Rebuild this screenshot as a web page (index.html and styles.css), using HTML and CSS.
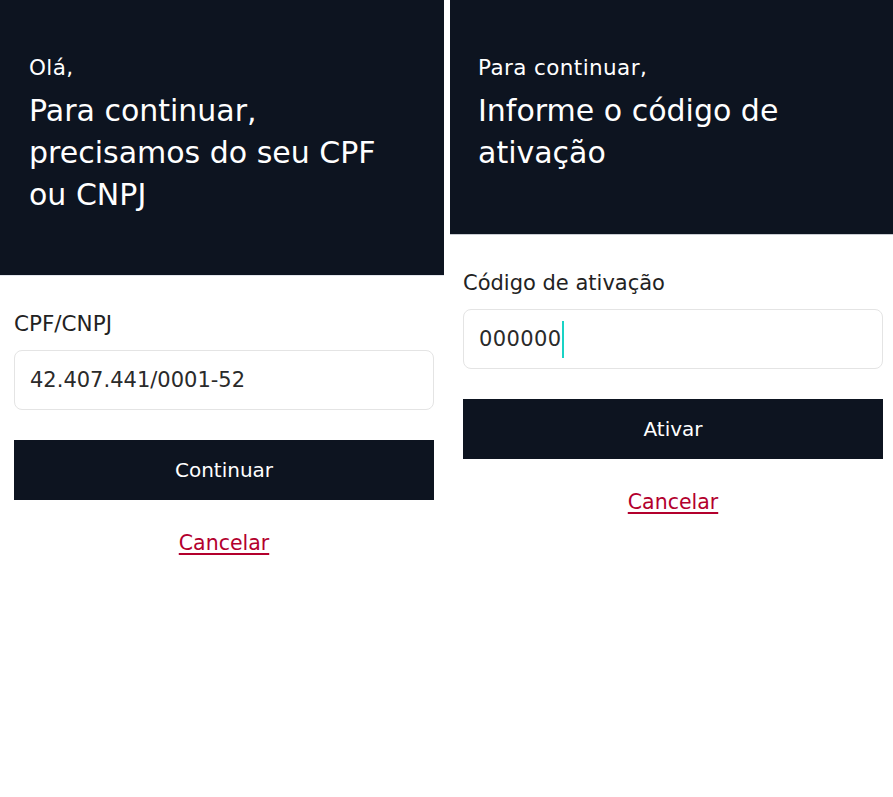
FILE: index.html
```html
<!DOCTYPE html>
<html lang="pt-BR">
<head>
<meta charset="utf-8">
<title>Ativação</title>
<link rel="stylesheet" href="styles.css">
</head>
<body>
<div class="screens">
  <section class="screen screen-cpf">
    <header class="hero hero-cpf">
      <p class="hero-kicker">Olá,</p>
      <h1 class="hero-title">Para continuar,<br>precisamos do seu CPF<br>ou CNPJ</h1>
    </header>
    <div class="form form-cpf">
      <label class="field-label">CPF/CNPJ</label>
      <div class="field">42.407.441/0001-52</div>
      <button class="btn-primary">Continuar</button>
      <a class="link-cancel" href="#">Cancelar</a>
    </div>
  </section>
  <section class="screen screen-code">
    <header class="hero hero-code">
      <p class="hero-kicker">Para continuar,</p>
      <h1 class="hero-title">Informe o código de<br>ativação</h1>
    </header>
    <div class="form form-code">
      <label class="field-label">Código de ativação</label>
      <div class="field field-code">000000<span class="caret"></span></div>
      <button class="btn-primary">Ativar</button>
      <a class="link-cancel" href="#">Cancelar</a>
    </div>
  </section>
</div>
</body>
</html>
```

FILE: styles.css
```css
* { box-sizing: border-box; }
html, body { margin: 0; padding: 0; background: #ffffff; }
body {
  width: 893px;
  height: 797px;
  font-family: "DejaVu Sans", "Open Sans", sans-serif;
  color: #222222;
  overflow: hidden;
}
.screens {
  display: flex;
  gap: 6px;
}
.screen-cpf { width: 444px; }
.screen-code { width: 443px; }

.hero {
  background: #0d1420;
  color: #ffffff;
  padding: 52px 10px 0 29px;
}
.hero-cpf { height: 276px; border-bottom: 1px solid #e3e6ed; }
.hero-code { height: 235px; border-bottom: 1px solid #c9ccd2; padding-left: 28px; }

.hero-kicker {
  margin: 0;
  font-size: 21.5px;
  line-height: 32px;
  font-weight: 400;
  letter-spacing: 0.4px;
}
.hero-title {
  margin: 6px 0 0;
  font-size: 30px;
  line-height: 42px;
  font-weight: 400;
  letter-spacing: 0;
}

.form {
  display: flex;
  flex-direction: column;
  width: 420px;
  margin-left: 14px;
  padding-top: 34px;
}
.form-code { margin-left: 13px; }

.field-label {
  font-size: 21px;
  line-height: 28px;
  color: #222222;
}
.form-cpf .field-label { font-size: 21.5px; }
.field {
  margin-top: 12px;
  height: 60px;
  border: 1px solid #e4e4e4;
  border-radius: 8px;
  padding: 0 15px;
  display: flex;
  align-items: center;
  font-size: 21px;
  color: #2a2a2a;
}
.field-code { letter-spacing: 0.4px; }
.caret {
  display: inline-block;
  width: 2px;
  height: 37px;
  margin-left: 0;
  background: #19d3c5;
}
.btn-primary {
  margin-top: 30px;
  height: 60px;
  border: 0;
  border-radius: 0;
  background: #0d1420;
  color: #ffffff;
  font-family: inherit;
  font-size: 20px;
  cursor: pointer;
}
.link-cancel {
  align-self: center;
  margin-top: 29px;
  font-size: 20.5px;
  line-height: 28px;
  color: #b3002d;
  text-decoration: underline;
  text-underline-offset: 3px;
}
```
